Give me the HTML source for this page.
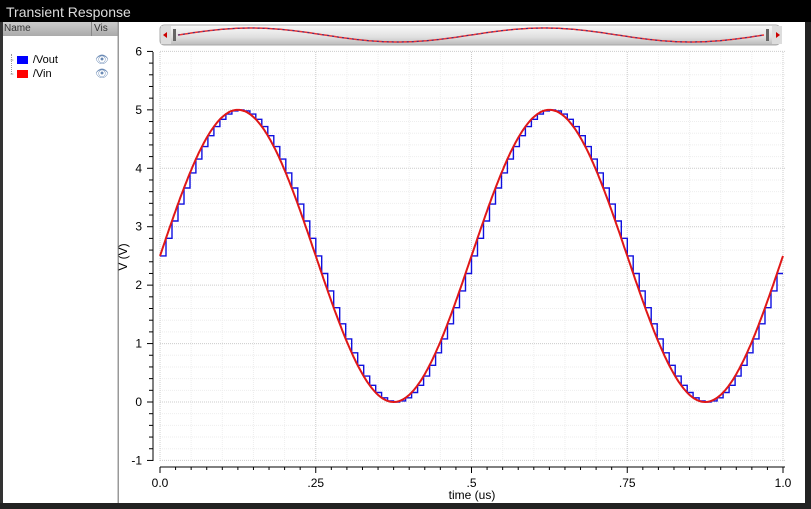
<!DOCTYPE html>
<html><head><style>
body{margin:0;width:811px;height:509px;overflow:hidden;background:#fff;font-family:"Liberation Sans",sans-serif;position:relative}
.title{position:absolute;left:0;top:0;width:811px;height:22px;background:#000;color:#ddd;font-size:14px;line-height:24px;padding-left:6px;box-sizing:border-box}
.left{position:absolute;left:0;top:22px;width:118px;height:482px;background:#fff;border-right:1px solid #999}
.hdr{height:14px;background:linear-gradient(#ccc,#aaa);font-size:10px;color:#333;line-height:14px;position:relative}
.item{position:absolute;font-size:11px;color:#000}
.sw{display:inline-block;width:11px;height:8px;vertical-align:middle;margin-right:5px}
</style></head><body>
<div class="title">Transient Response</div>
<div class="left">
 <div class="hdr"><span style="padding-left:4px">Name</span><span style="position:absolute;left:91px;top:0;height:14px;border-left:1px solid #888;padding-left:2px">Vis</span></div>
 <div style="position:absolute;left:11px;top:32px;width:1px;height:20px;border-left:1px dotted #999"></div>
 <div class="item" style="left:4px;top:32px">&nbsp;&nbsp;<span style="color:#999">-</span> <span class="sw" style="background:#00f"></span>/Vout</div>
 <div class="item" style="left:4px;top:46px">&nbsp;&nbsp;<span style="color:#999">-</span> <span class="sw" style="background:#f00"></span>/Vin</div>
 <div class="item" style="left:95px;top:31px;color:#6a8ab5;font-size:11px">👁</div>
 <div class="item" style="left:95px;top:45px;color:#6a8ab5;font-size:11px">👁</div>
</div>
<div style="position:absolute;left:0;top:22px;width:3px;height:487px;background:#333"></div>
<div style="position:absolute;left:805px;top:22px;width:6px;height:487px;background:#222"></div>
<div style="position:absolute;left:0;top:503px;width:811px;height:6px;background:#222"></div>
<svg id="s" width="811" height="509" style="position:absolute;left:0;top:0" font-family="Liberation Sans, sans-serif" font-size="12"></svg>
<script>
var s=document.getElementById('s'),h='';
function X(t){return 160+623*t}function Y(v){return 402-58.43*v}
h+='<defs><linearGradient id="g" x1="0" y1="0" x2="0" y2="1"><stop offset="0" stop-color="#fafafa"/><stop offset="0.6" stop-color="#e0e0e0"/><stop offset="1" stop-color="#bbb"/></linearGradient></defs>';
h+='<rect x="160" y="25" width="620" height="20" rx="4" fill="url(#g)" stroke="#aaa"/>';
h+='<rect x="161" y="26" width="10" height="18" fill="#ddd"/><rect x="772" y="26" width="10" height="18" fill="#ddd"/>';
h+='<polygon points="167,32 163,35 167,38" fill="#c00"/><polygon points="776,32 780,35 776,38" fill="#c00"/>';
h+='<rect x="173" y="29" width="3" height="12" fill="#666"/><rect x="766" y="29" width="3" height="12" fill="#666"/>';
var m='';for(var i=0;i<=200;i++){var t=i/200;m+=(i?'L':'M')+(178+586*t).toFixed(1)+','+(35-7*Math.sin(4*Math.PI*t)).toFixed(1);}
h+='<path d="'+m+'" fill="none" stroke="#e33" stroke-width="1.5"/><path d="'+m+'" fill="none" stroke="#338" stroke-width="1" stroke-dasharray="2,3"/>';
for(var j=-5;j<=30;j++){var v=j/5;var y=Y(v);var maj=j%5==0;h+='<line x1="160" x2="785" y1="'+y+'" y2="'+y+'" stroke="'+(maj?'#ccc':'#eee')+'" stroke-dasharray="1,1"/>';}
for(var k=0;k<=20;k++){var x=X(k/20);var maj=k%5==0;h+='<line y1="52" y2="461" x1="'+x+'" x2="'+x+'" stroke="'+(maj?'#ccc':'#eee')+'" stroke-dasharray="1,1"/>';}
h+='<line x1="153" y1="52" x2="153" y2="461" stroke="#000"/>';
for(var j=-5;j<=30;j++){var v=j/5;var y=Y(v);var maj=j%5==0;h+='<line x1="'+(maj?147:149)+'" x2="153" y1="'+y+'" y2="'+y+'" stroke="#000"/>';if(maj)h+='<text x="142" y="'+(y+4)+'" text-anchor="end">'+(j/5)+'</text>';}
h+='<line x1="160" y1="467" x2="785" y2="467" stroke="#000"/>';
for(var k=0;k<=40;k++){var x=X(k/40);h+='<line y1="467" y2="'+(k%10==0?473:470)+'" x1="'+x+'" x2="'+x+'" stroke="#000"/>';}
var lb=['0.0','.25','.5','.75','1.0'];for(var k=0;k<5;k++)h+='<text x="'+X(k/4)+'" y="487" text-anchor="middle">'+lb[k]+'</text>';
h+='<text x="472" y="499" text-anchor="middle">time (us)</text>';
h+='<text transform="translate(127,257) rotate(-90)" text-anchor="middle">V (V)</text>';
h+='<line x1="118" y1="22" x2="118" y2="503" stroke="#999"/>';
var N=104,d='';for(var i=0;i<N;i++){var t0=i/N,t1=(i+1)/N;var v=2.5+2.5*Math.sin(4*Math.PI*t0);var y=Y(v).toFixed(1);d+=(i?'L':'M')+X(t0).toFixed(1)+','+y+'L'+X(t1).toFixed(1)+','+y;}
h+='<path d="'+d+'" fill="none" stroke="#1010e0" stroke-width="1.4"/>';
var p='';for(var i=0;i<=400;i++){var t=i/400;p+=(i?'L':'M')+X(t).toFixed(1)+','+Y(2.5+2.5*Math.sin(4*Math.PI*t)).toFixed(1);}
h+='<path d="'+p+'" fill="none" stroke="#e01818" stroke-width="2"/>';
s.innerHTML=h;
</script>
</body></html>
